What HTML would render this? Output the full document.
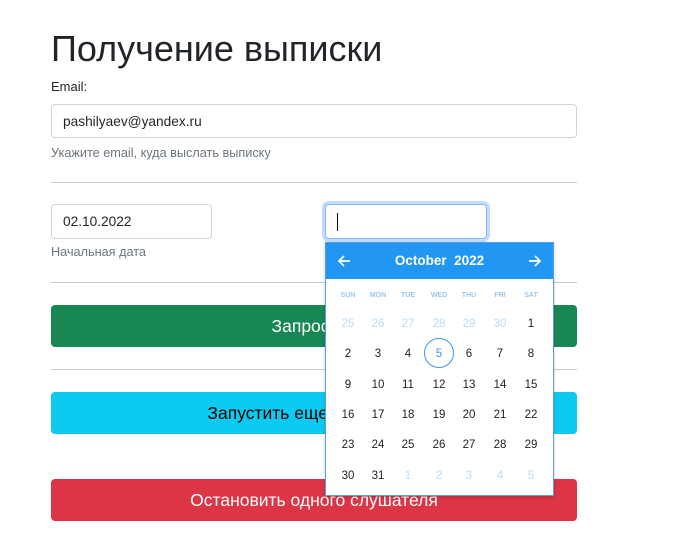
<!DOCTYPE html>
<html><head><meta charset="utf-8"><style>
body{margin:0;background:#fff;font-family:"Liberation Sans",sans-serif;color:#212529;width:677px;height:546px;overflow:hidden;position:relative}
.a{position:absolute}
h1{position:absolute;left:51px;top:27px;margin:0;font-weight:400;font-size:36px;line-height:44px;font-family:"Liberation Sans",sans-serif}
.inp{position:absolute;border:1px solid #ced4da;border-radius:4px;background:#fff;font-size:13.7px;box-sizing:border-box;padding-left:11px;line-height:33px}
.hr{position:absolute;left:51px;width:526px;height:1px;background:#c8c8c8}
.btn{position:absolute;left:51px;width:526px;height:42px;border-radius:4px;color:#fff;font-size:17.5px;text-align:center;line-height:42px}
.small{position:absolute;font-size:12.7px;color:#6c757d}
.cal{position:absolute;left:325px;top:242px;width:229px;height:254px;background:#fff;border:1px solid #5b9fe0;box-sizing:border-box;box-shadow:0 1px 3px rgba(0,0,0,.2)}
.d{position:absolute;width:30px;text-align:center;font-size:11.5px;font-family:"Liberation Sans",sans-serif;color:#222;line-height:14px}
.o{color:#bcdcf7}
.w{font-size:7px;color:#9cc6ee;font-weight:bold}
</style></head><body>
<h1>Получение выписки</h1>
<div class="a" style="left:51px;top:79px;font-size:13px">Email:</div>
<div class="inp" style="left:51px;top:104px;width:526px;height:34px">pashilyaev@yandex.ru</div>
<div class="small" style="left:51px;top:146px">Укажите email, куда выслать выписку</div>
<div class="hr" style="top:182px"></div>
<div class="inp" style="left:51px;top:204px;width:161px;height:35px">02.10.2022</div>
<div class="small" style="left:51px;top:245px">Начальная дата</div>
<div class="inp" style="left:325px;top:204px;width:162px;height:35px;border-color:#86b7fe;box-shadow:0 0 0 3px #c2dbfe"><span style="display:inline-block;width:1px;height:18px;background:#000;vertical-align:middle"></span></div>
<div class="hr" style="top:282px"></div>
<div class="btn" style="top:305px;background:#198754">Запросить</div>
<div class="hr" style="top:369px"></div>
<div class="btn" style="top:392px;background:#0dcaf0;color:#000">Запустить еще слушателя</div>
<div class="btn" style="top:479px;background:#dc3545">Остановить одного слушателя</div>
<div class="cal">
<div class="a" style="left:0;top:0;width:227px;height:36px;background:#2196f3"></div>
<div class="a" style="left:0;top:10px;width:227px;text-align:center;color:#fff;font-weight:bold;font-size:13.5px;font-family:'Liberation Sans',sans-serif">October&nbsp; 2022</div>
<svg class="a" style="left:11px;top:11px" width="14" height="14" viewBox="0 0 14 14"><path d="M13 7H2M7 2L2 7l5 5" stroke="#fff" stroke-width="1.8" fill="none"/></svg>
<svg class="a" style="left:202px;top:11px" width="14" height="14" viewBox="0 0 14 14"><path d="M1 7h11M7 2l5 5-5 5" stroke="#fff" stroke-width="1.8" fill="none"/></svg>
<div class="a" style="left:98px;top:95px;width:30px;height:30px;border:1.5px solid #3b97ee;border-radius:50%;box-sizing:border-box"></div>
<div id="g"></div>
</div>
<script>
var g=document.getElementById('g'),h='';
var cx=[22,52,82,113,143,174,205],ry=[80,110,141,171,201,232];
var wn=['SUN','MON','TUE','WED','THU','FRI','SAT'];
for(var i=0;i<7;i++)h+='<div class="d w" style="left:'+(cx[i]-15)+'px;top:46px">'+wn[i]+'</div>';
var days=[[25,26,27,28,29,30,1],[2,3,4,5,6,7,8],[9,10,11,12,13,14,15],[16,17,18,19,20,21,22],[23,24,25,26,27,28,29],[30,31,1,2,3,4,5]];
for(var r=0;r<6;r++)for(var c=0;c<7;c++){var o=(r==0&&c<6)||(r==5&&c>1);var st=(r==1&&c==3)?'color:#3b97ee;':'';
h+='<div class="d'+(o?' o':'')+'" style="'+st+'left:'+(cx[c]-15)+'px;top:'+(ry[r]-6)+'px">'+days[r][c]+'</div>';}
g.innerHTML=h;
</script>
</body></html>
